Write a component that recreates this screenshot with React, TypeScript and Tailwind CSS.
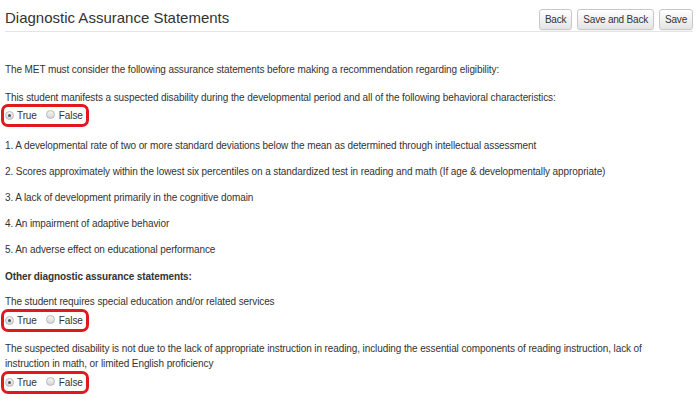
import React from 'react';

const font = { fontFamily: '"Liberation Sans", Arial, sans-serif' };

function Radio({ checked }: { checked?: boolean }) {
  return (
    <span className="inline-flex h-[9px] w-[9px] shrink-0 items-center justify-center rounded-full border border-[#b8b8b8] bg-gradient-to-b from-[#f6f6f6] to-[#d6d6d6]">
      {checked && <span className="h-[3px] w-[3px] rounded-full bg-[#555]" />}
    </span>
  );
}

function TrueFalse({ className = '' }: { className?: string }) {
  return (
    <div className={className}>
      <div className="ml-[-4px] inline-flex h-[23px] w-[88px] items-center rounded-[7px] border-[3px] border-[#e0191f] pl-[1px] leading-[15px]">
        <Radio checked />
        <span className="ml-[3px]">True</span>
        <span className="ml-[9px]"><Radio /></span>
        <span className="ml-[4px]">False</span>
      </div>
    </div>
  );
}

function Btn({ children }: { children: React.ReactNode }) {
  return (
    <button className="h-[21px] rounded-[3px] border border-[#c8c8c8] bg-gradient-to-b from-white to-[#e4e4e4] px-[5px] text-[10px] tracking-[-0.2px] text-[#333] shadow-[0_1px_1px_rgba(0,0,0,0.05)]">
      {children}
    </button>
  );
}

export default function App() {
  return (
    <div style={font} className="h-[402px] w-[698px] overflow-hidden bg-white px-[5px] text-[10px] tracking-[-0.1px] text-[#333]">
      <div className="flex h-[32px] items-start justify-between border-b border-[#e5e5e5]">
        <h1 className="mt-[8px] text-[15px] leading-[20px] tracking-normal text-[#333]">Diagnostic Assurance Statements</h1>
        <div className="mt-[9px] flex gap-[5px]">
          <Btn>Back</Btn>
          <Btn>Save and Back</Btn>
          <Btn>Save</Btn>
        </div>
      </div>
      <div className="pt-[30px] leading-[15px]">
        <p>The MET must consider the following assurance statements before making a recommendation regarding eligibility:</p>
        <p className="mt-[13px]">This student manifests a suspected disability during the developmental period and all of the following behavioral characteristics:</p>
        <TrueFalse className="mt-[-1px]" />
        <p className="mt-[11px]">1. A developmental rate of two or more standard deviations below the mean as determined through intellectual assessment</p>
        <p className="mt-[11px]">2. Scores approximately within the lowest six percentiles on a standardized test in reading and math (If age &amp; developmentally appropriate)</p>
        <p className="mt-[11px]">3. A lack of development primarily in the cognitive domain</p>
        <p className="mt-[11px]">4. An impairment of adaptive behavior</p>
        <p className="mt-[11px]">5. An adverse effect on educational performance</p>
        <p className="mt-[12px] font-bold">Other diagnostic assurance statements:</p>
        <p className="mt-[10px]">The student requires special education and/or related services</p>
        <TrueFalse className="mt-0" />
        <p className="mt-[9px]">The suspected disability is not due to the lack of appropriate instruction in reading, including the essential components of reading instruction, lack of<br />instruction in math, or limited English proficiency</p>
        <TrueFalse className="mt-0" />
      </div>
    </div>
  );
}
